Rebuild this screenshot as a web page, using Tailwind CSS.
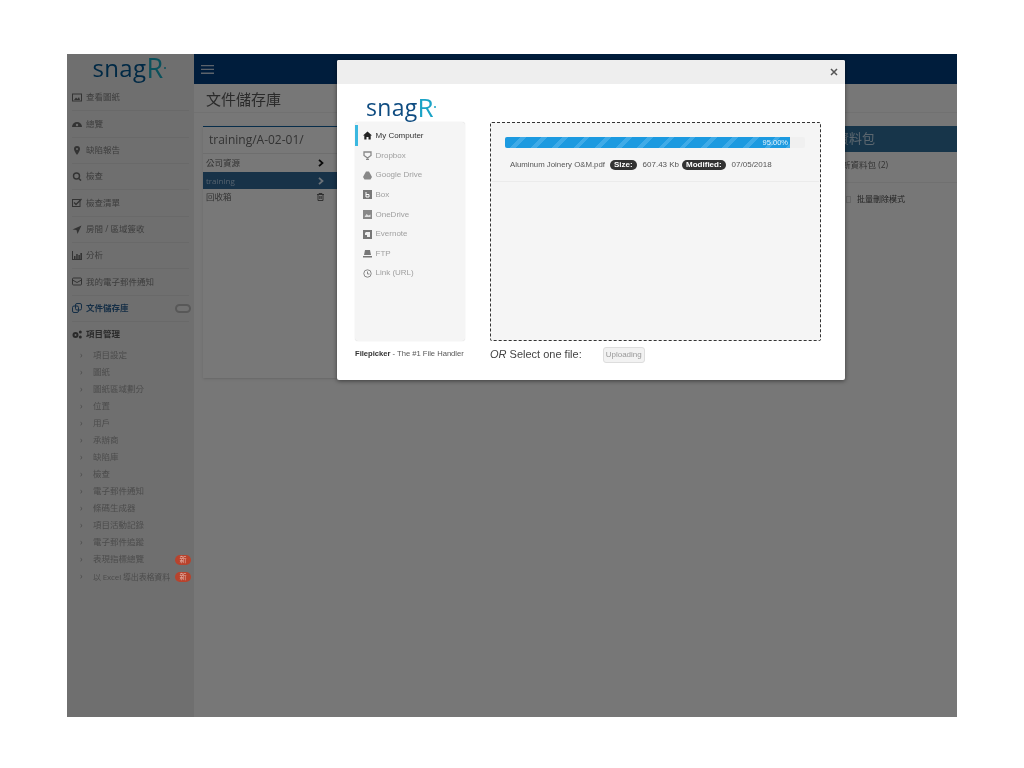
<!DOCTYPE html>
<html lang="zh-Hant">
<head>
    <meta charset="UTF-8">
    <meta name="viewport" content="width=device-width, initial-scale=1.0">
    <title>snagR 文件儲存庫</title>
    <script src="https://cdn.jsdelivr.net/npm/@tailwindcss/browser@4"></script>
</head>
<body class="bg-white font-['Open_Sans','Noto_Sans_CJK_TC',sans-serif]">
<div class="pt-[54px] blur-[0.3px]">
    <div class="relative mx-auto flex h-[663px] w-[890px] bg-[#eeeeee]">

        <!-- Sidebar -->
        <aside class="w-[127px] shrink-0 bg-[#dedede] text-[8.5px] text-[#7a7a7a]">
            <div class="flex h-[31px] items-center justify-center pb-[4px] pr-[3px] text-[24px] leading-[27px] tracking-[0.4px] text-[#00528a]">snag<span class="text-[27px] text-[#17a2b8]">R</span><span class="h-[2px] w-[2px] rounded-full bg-[#17a2b8]"></span></div>
            <div class="mx-[5px] flex h-[26.33px] items-center gap-[3px] border-b border-[#d2d2d2]">
                <svg class="h-[9px] w-[10px]" viewBox="0 0 10 9" fill="none" stroke="#666" stroke-width="1"><rect x="0.5" y="1" width="9" height="7"/><path d="M2 7l2-2.500 1.500 1.500 1.500-2 1 3z" fill="#666" stroke="none"/></svg>
                <span class="ml-[1px]">查看圖紙</span>
            </div>
            <div class="mx-[5px] flex h-[26.33px] items-center gap-[3px] border-b border-[#d2d2d2]">
                <svg class="h-[9px] w-[10px]" viewBox="0 0 10 9" fill="#666"><path d="M0 8a5 5 0 0 1 10 0z"/><circle cx="5" cy="6" r="1.200" fill="#ddd"/></svg>
                <span class="ml-[1px]">總覽</span>
            </div>
            <div class="mx-[5px] flex h-[26.33px] items-center gap-[3px] border-b border-[#d2d2d2]">
                <svg class="h-[9px] w-[10px]" viewBox="0 0 10 9" fill="#666"><path d="M5 0a3 3 0 0 1 3 3c0 2-3 6-3 6S2 5 2 3a3 3 0 0 1 3-3z"/><circle cx="5" cy="3" r="1" fill="#ddd"/></svg>
                <span class="ml-[1px]">缺陷報告</span>
            </div>
            <div class="mx-[5px] flex h-[26.33px] items-center gap-[3px] border-b border-[#d2d2d2]">
                <svg class="h-[9px] w-[10px]" viewBox="0 0 10 9" fill="none" stroke="#666" stroke-width="1.400"><circle cx="4.500" cy="4" r="3"/><path d="M6.500 6.200L9 8.600"/></svg>
                <span class="ml-[1px]">檢查</span>
            </div>
            <div class="mx-[5px] flex h-[26.33px] items-center gap-[3px] border-b border-[#d2d2d2]">
                <svg class="h-[9px] w-[10px]" viewBox="0 0 10 9" fill="none" stroke="#666" stroke-width="1"><rect x="0.500" y="1.500" width="7.500" height="7"/><path d="M2 4.500l2 2L9.500 1" stroke-width="1.300"/></svg>
                <span class="ml-[1px]">檢查清單</span>
            </div>
            <div class="mx-[5px] flex h-[26.33px] items-center gap-[3px] border-b border-[#d2d2d2]">
                <svg class="h-[9px] w-[10px]" viewBox="0 0 10 9" fill="#666"><path d="M9.500 0.500L5.500 9 4.500 5 0.500 4.500z"/></svg>
                <span class="ml-[1px]">房間 / 區域簽收</span>
            </div>
            <div class="mx-[5px] flex h-[26.33px] items-center gap-[3px] border-b border-[#d2d2d2]">
                <svg class="h-[9px] w-[10px]" viewBox="0 0 10 9" fill="#666"><path d="M0 0h1v8h9v1H0zM2 5h1.500v3H2zM4.200 3h1.500v5H4.200zM6.400 4h1.500v4H6.400zM8.400 2H10v6H8.400z"/></svg>
                <span class="ml-[1px]">分析</span>
            </div>
            <div class="mx-[5px] flex h-[26.33px] items-center gap-[3px] border-b border-[#d2d2d2]">
                <svg class="h-[9px] w-[10px]" viewBox="0 0 10 9" fill="none" stroke="#666" stroke-width="1"><rect x="0.500" y="1" width="9" height="7" rx="1"/><path d="M0.500 3l4.500 2.500L9.500 3"/></svg>
                <span class="ml-[1px]">我的電子郵件通知</span>
            </div>
            <div class="mx-[5px] flex h-[26.33px] items-center gap-[3px] border-b border-[#d2d2d2] font-bold text-[#2a5d8c]">
                <svg class="h-[10px] w-[10px]" viewBox="0 0 10 10" fill="none" stroke="#2a5d8c" stroke-width="1"><rect x="0.500" y="3" width="6" height="6.500" rx="1.500"/><rect x="3.500" y="0.500" width="6" height="6.500" rx="1.500"/></svg>
                <span class="ml-[1px]">文件儲存庫</span>
                <span class="ml-auto mr-[-2px] h-[9px] w-[16px] rounded-full border-2 border-[#b0b0b0] bg-[#e2e2e2]"></span>
            </div>
            <div class="mx-[5px] -mt-[1px] flex h-[26.33px] items-center gap-[3px] font-bold text-[#555555]">
                <svg class="h-[9px] w-[10px]" viewBox="0 0 10 9" fill="#555"><circle cx="3.500" cy="5" r="3"/><circle cx="3.500" cy="5" r="1" fill="#ddd"/><circle cx="8.300" cy="2" r="1.500"/><circle cx="8.300" cy="7" r="1.500"/></svg>
                <span class="ml-[1px]">項目管理</span>
            </div>
            <ul class="text-[#989898]">
                <li class="flex h-[17px] items-center whitespace-nowrap pl-[13px] pr-[3px]"><span class="w-[13px]">›</span>項目設定</li>
                <li class="flex h-[17px] items-center whitespace-nowrap pl-[13px] pr-[3px]"><span class="w-[13px]">›</span>圖紙</li>
                <li class="flex h-[17px] items-center whitespace-nowrap pl-[13px] pr-[3px]"><span class="w-[13px]">›</span>圖紙區域劃分</li>
                <li class="flex h-[17px] items-center whitespace-nowrap pl-[13px] pr-[3px]"><span class="w-[13px]">›</span>位置</li>
                <li class="flex h-[17px] items-center whitespace-nowrap pl-[13px] pr-[3px]"><span class="w-[13px]">›</span>用戶</li>
                <li class="flex h-[17px] items-center whitespace-nowrap pl-[13px] pr-[3px]"><span class="w-[13px]">›</span>承辦商</li>
                <li class="flex h-[17px] items-center whitespace-nowrap pl-[13px] pr-[3px]"><span class="w-[13px]">›</span>缺陷庫</li>
                <li class="flex h-[17px] items-center whitespace-nowrap pl-[13px] pr-[3px]"><span class="w-[13px]">›</span>檢查</li>
                <li class="flex h-[17px] items-center whitespace-nowrap pl-[13px] pr-[3px]"><span class="w-[13px]">›</span>電子郵件通知</li>
                <li class="flex h-[17px] items-center whitespace-nowrap pl-[13px] pr-[3px]"><span class="w-[13px]">›</span>條碼生成器</li>
                <li class="flex h-[17px] items-center whitespace-nowrap pl-[13px] pr-[3px]"><span class="w-[13px]">›</span>項目活動記錄</li>
                <li class="flex h-[17px] items-center whitespace-nowrap pl-[13px] pr-[3px]"><span class="w-[13px]">›</span>電子郵件追蹤</li>
                <li class="flex h-[17px] items-center whitespace-nowrap pl-[13px] pr-[3px]"><span class="w-[13px]">›</span>表現指標總覽<span class="relative z-10 ml-auto flex h-[10px] w-[16px] items-center justify-center rounded-full bg-[#b8432d] text-[7px] text-[#e8b8ae]">新</span></li>
                <li class="flex h-[17px] items-center whitespace-nowrap pl-[13px] pr-[3px] tracking-[-0.15px]"><span class="w-[13px]">›</span><span class="text-[8px]">以 Excel 導出表格資料</span><span class="relative z-10 ml-auto flex h-[10px] w-[16px] shrink-0 items-center justify-center rounded-full bg-[#b8432d] text-[7px] text-[#e8b8ae]">新</span></li>
            </ul>
        </aside>

        <!-- Main -->
        <div class="flex-1">
            <header class="flex h-[30px] items-center bg-[#003a78] pl-[7px]">
                <svg class="h-[9px] w-[13px]" viewBox="0 0 13 9" fill="#b8c6d6"><path d="M0 0h13v1.300H0zM0 3.800h13v1.300H0zM0 7.600h13v1.300H0z"/></svg>
            </header>
            <div class="flex h-[29px] items-center border-b border-[#e2e2e2] pl-[12px] pt-[2px] text-[15px] text-[#555555]">文件儲存庫</div>
            <div class="flex pl-[9px] pt-[13px]">
                <section class="h-[252px] w-[134px] border-t border-t-[#0f5a94] bg-[#f0f0f0] shadow-sm">
                    <div class="flex h-[27px] items-center border-b border-[#dddddd] pl-[6px] text-[12px] text-[#666666]">training/A-02-01/</div>
                    <div class="flex h-[18px] items-center justify-between pl-[3px] pr-[13px] text-[8.5px] text-[#666666]">公司資源
                        <svg class="h-[8px] w-[6px]" viewBox="0 0 6 8" fill="none" stroke="#111" stroke-width="1.800"><path d="M1 .8L4.500 4 1 7.200"/></svg>
                    </div>
                    <div class="flex h-[17px] items-center justify-between bg-[#2f6490] pl-[3px] pr-[13px] text-[8px] text-[#a9c4dc]">training
                        <svg class="h-[8px] w-[6px]" viewBox="0 0 6 8" fill="none" stroke="#d6e4f0" stroke-width="1.800"><path d="M1 .8L4.500 4 1 7.200"/></svg>
                    </div>
                    <div class="flex h-[16px] items-center justify-between pl-[3px] pr-[13px] text-[8.5px] text-[#666666]">回收箱
                        <svg class="h-[8px] w-[7px]" viewBox="0 0 7 8" fill="none" stroke="#555" stroke-width="0.900"><path d="M0 1.500h7M2 1.500V.5h3v1M1 1.500v6h5v-6M2.800 3v3M4.200 3v3"/></svg>
                    </div>
                </section>
                <section class="ml-[506px] w-[114px] shrink-0">
                    <div class="flex h-[26px] items-center whitespace-nowrap bg-[#2f6a94] text-[13px] text-[#b8cede]"><span class="-ml-[7px]">資料包</span></div>
                    <div class="h-[31px] border-b border-[#e0e0e0] pt-[7px] text-[8.5px] leading-[12px] text-[#666666]"><span class="-ml-[1px]">新資料包 (2)</span></div>
                    <div class="flex h-[32px] items-center gap-[6px] pl-[3px] text-[8px] text-[#444444]">
                        <span class="h-[7px] w-[5px] border border-[#cccccc]"></span>批量刪除模式
                    </div>
                </section>
            </div>
        </div>

        <!-- Dim layer -->
        <div class="absolute inset-0 bg-black/50"></div>

        <!-- Upload modal -->
        <div class="absolute left-[270px] top-[6px] z-20 h-[320px] w-[508px] rounded-[2px] bg-white shadow-[0_1px_4px_rgba(0,0,0,0.5)] font-['Liberation_Sans',sans-serif]">
            <div class="flex h-[24px] items-center justify-end rounded-t-[2px] bg-[#eeeeee] pr-[7px]">
                <svg class="h-[8px] w-[8px]" viewBox="0 0 8 8" stroke="#555" stroke-width="1.500"><path d="M1 1l6 6M7 1L1 7"/></svg>
            </div>
            <div class="flex pl-[18px] pr-[24px]">
                <div class="w-[110px]">
                    <div class="flex h-[38px] items-start pl-[11px] pt-[10px] font-['Open_Sans',sans-serif] text-[23px] leading-[26px] tracking-[0.3px] text-[#0f4c81]">snag<span class="text-[26px] text-[#1ba3c6]">R</span><span class="mt-[12px] h-[2px] w-[2px] rounded-full bg-[#1ba3c6]"></span></div>
                    <nav class="h-[219px] rounded-[3px] bg-[#f5f5f5] pt-[3px] text-[8px] text-[#a0a0a0] shadow-[0_0_1px_rgba(0,0,0,0.2)]">
                        <div class="flex h-[20.5px] items-center gap-[3.5px] border-l-[3px] border-[#3bb8e0] pl-[5px] pt-[1px] text-[#333333]">
                            <svg class="h-[9px] w-[9px]" viewBox="0 0 9 9" fill="#222"><path d="M4.500 0.500L9 4.500H7.700V8.500H5.500V6H3.500V8.500H1.300V4.500H0z"/></svg>My Computer
                        </div>
                        <div class="flex h-[19.6px] items-center gap-[3.5px] pl-[8px] pt-[1px]">
                            <svg class="h-[9px] w-[9px]" viewBox="0 0 9 9" fill="none" stroke="#888" stroke-width="1.300"><path d="M1 1h7v3.500L4.500 7 1 4.500zM3 8.500h3"/></svg>Dropbox
                        </div>
                        <div class="flex h-[19.6px] items-center gap-[3.5px] pl-[8px] pt-[1px]">
                            <svg class="h-[9px] w-[9px]" viewBox="0 0 9 9" fill="#888"><path d="M3 0.500h3L9 6 7.500 8.500h-6L0 6z"/></svg>Google Drive
                        </div>
                        <div class="flex h-[19.6px] items-center gap-[3.5px] pl-[8px] pt-[1px]">
                            <svg class="h-[9px] w-[9px]" viewBox="0 0 9 9"><rect width="9" height="9" fill="#777"/><path d="M3 2v5h3V4.500H3" fill="none" stroke="#fff" stroke-width="1"/></svg>Box
                        </div>
                        <div class="flex h-[19.6px] items-center gap-[3.5px] pl-[8px] pt-[1px]">
                            <svg class="h-[9px] w-[9px]" viewBox="0 0 9 9"><rect width="9" height="9" fill="#888"/><path d="M1.500 7l2-3 2 1.500 2-1V7z" fill="#ddd"/></svg>OneDrive
                        </div>
                        <div class="flex h-[19.6px] items-center gap-[3.5px] pl-[8px] pt-[1px]">
                            <svg class="h-[9px] w-[9px]" viewBox="0 0 9 9"><rect width="9" height="9" fill="#777"/><path d="M3 2h4v5H4V5H2V3z" fill="#eee"/></svg>Evernote
                        </div>
                        <div class="flex h-[19.6px] items-center gap-[3.5px] pl-[8px] pt-[1px]">
                            <svg class="h-[9px] w-[9px]" viewBox="0 0 9 9" fill="#777"><path d="M2 1h5l1 5H1zM0 7h9v1.500H0z"/></svg>FTP
                        </div>
                        <div class="flex h-[19.6px] items-center gap-[3.5px] pl-[8px] pt-[1px]">
                            <svg class="h-[9px] w-[9px]" viewBox="0 0 9 9" fill="none" stroke="#888" stroke-width="1"><circle cx="4.500" cy="4.500" r="3.700"/><path d="M4.500 2.500v2.500H6.500"/></svg>Link (URL)
                        </div>
                    </nav>
                    <p class="mt-[7px] whitespace-nowrap text-[7.6px] text-[#555555]"><b class="text-[#333333]">Filepicker</b> - The #1 File Handler</p>
                </div>
                <div class="ml-[25px] flex-1 pt-[38px]">
                    <div class="h-[219px] rounded-[2px] border border-dashed border-[#333333] bg-[#f5f5f5] pt-[14px]">
                        <div class="mx-[14px] h-[11px] w-[300px] rounded-[2px] bg-[#f0f0f0]">
                            <div class="h-full w-[95%] rounded-l-[2px] bg-[#1b9ae0] bg-[repeating-linear-gradient(135deg,#1c9ae0_0,#1c9ae0_11px,#3fabe8_11px,#3fabe8_15px)] pr-[2px] text-right text-[7.5px] leading-[11px] text-[#e4f3fc]">95.00%</div>
                        </div>
                        <div class="mx-[1px] flex h-[34px] items-center border-b border-[#ebebeb] pl-[18px] pt-[1px] text-[8px] text-[#555555]">
                            <span class="text-[7.8px]">Aluminum Joinery O&amp;M.pdf</span>
                            <b class="ml-[5px] rounded-full bg-[#333333] px-[4px] leading-[10px] text-white">Size:</b>
                            <span class="ml-[6px]">607.43 Kb</span>
                            <b class="ml-[3px] rounded-full bg-[#333333] px-[4px] leading-[10px] text-white">Modified:</b>
                            <span class="ml-[6px]">07/05/2018</span>
                        </div>
                    </div>
                    <div class="mt-[6px] flex items-start">
                        <span class="-mt-[1px] text-[11px] text-[#444444]"><i>OR</i> Select one file:</span>
                        <button class="ml-[21px] h-[16px] w-[42px] rounded-[3px] border border-[#dddddd] bg-[#f2f2f2] text-[8px] text-[#999999]">Uploading</button>
                    </div>
                </div>
            </div>
        </div>
    </div>
</div>
</body>
</html>
